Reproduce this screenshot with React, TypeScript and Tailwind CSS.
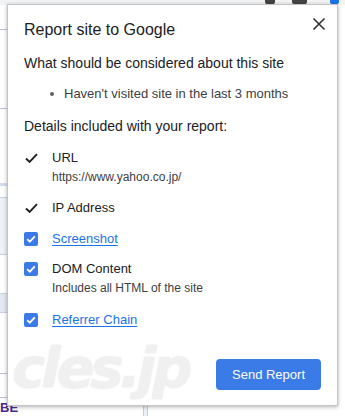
import React from "react"

function Check() {
  return (
    <svg width="15" height="14" viewBox="0 0 15 14" className="shrink-0">
      <path d="M2 7.5 L5.6 11 L13 3.2" fill="none" stroke="#202124" strokeWidth="1.9" />
    </svg>
  )
}

function Box() {
  return (
    <span className="w-[14px] h-[14px] shrink-0 rounded-[2px] bg-[#3b7be8] flex items-center justify-center">
      <svg width="12" height="12" viewBox="0 0 12 12">
        <path d="M2.2 6.2 L4.8 8.7 L9.8 3.3" fill="none" stroke="#fff" strokeWidth="1.8" />
      </svg>
    </span>
  )
}

function Row({ icon, label, link, sub, className }: { icon: React.ReactNode; label: string; link?: boolean; sub?: string; className?: string }) {
  return (
    <div className={"flex " + (className ?? "")}>
      <div className="w-[28px] pt-[1px] flex items-start">{icon}</div>
      <div className="flex flex-col">
        <span className={link ? "text-[13px] leading-4 text-[#1a73e8] underline underline-offset-2" : "text-[13px] leading-4"}>{label}</span>
        {sub && <span className="text-[12px] leading-4 mt-[3px] text-[#3c4043]">{sub}</span>}
      </div>
    </div>
  )
}

export default function App() {
  return (
    <div className="relative w-[345px] h-[416px] overflow-hidden bg-white font-['Liberation_Sans',Arial,sans-serif] text-[#202124]">
      {/* page behind the popup */}
      <div className="absolute inset-0 pointer-events-none">
        <div className="absolute top-0 left-0 right-0 h-[5px] bg-[#f1f3f4]" />
        <div className="absolute top-0 left-[265px] w-[10px] h-[4px] bg-[#444] rounded-b-[2px]" />
        <div className="absolute top-0 left-[292px] w-[15px] h-[4px] bg-[#444] rounded-b-[2px]" />
        <div className="absolute top-0 left-[330px] w-[9px] h-[4px] bg-[#1a73e8] rounded-b-[2px]" />
        <div className="absolute left-0 w-[8px] top-[29px] h-px bg-[#b9c3d6]" />
        <div className="absolute left-0 w-[8px] top-[108px] h-px bg-[#b9c3d6]" />
        <div className="absolute left-0 w-[8px] top-[183px] h-[3px] bg-[#d5dced]" />
        <div className="absolute left-0 w-[8px] top-[197px] h-[58px] bg-[#eef1f8] border-y border-[#c9d1e2]" />
        <div className="absolute left-0 w-[8px] top-[293px] h-[20px] bg-[#e3e8f3] border-y border-[#c9d1e2]" />
        <div className="absolute left-0 w-[8px] top-[373px] h-px bg-[#b9c3d6]" />
        <div className="absolute left-0 w-[8px] top-[397px] h-px bg-[#b9c3d6]" />
        <div className="absolute left-0 top-[400px] text-[13px] leading-4 font-bold text-[#4b2a8c]">BE</div>
        <div className="absolute top-[406px] left-[143px] w-[5px] h-[10px] border-x border-[#c5cde0] bg-[#eef1f8]" />
      </div>

      <div className="absolute left-[7px] top-[4px] w-[331px] h-[402px] bg-white border border-[#c4c4c4] shadow-[0_1px_4px_rgba(0,0,0,0.3)] px-4 pt-[15px]">
        <div className="flex items-start justify-between">
          <h1 className="text-[16px] leading-5">Report site to Google</h1>
          <svg width="14" height="14" viewBox="0 0 14 14" className="mt-[-3px] mr-[-5px]">
            <path d="M1.5 1.5 L12.5 12.5 M12.5 1.5 L1.5 12.5" stroke="#2f3033" strokeWidth="1.6" />
          </svg>
        </div>
        <p className="text-[14px] leading-4 mt-[15px]">What should be considered about this site</p>
        <ul className="mt-[15px] pl-[26px]">
          <li className="flex items-center text-[13px] leading-4 text-[#3c4043]">
            <span className="w-[4px] h-[4px] rounded-full bg-[#5f6368] mr-[10px]" />
            Haven't visited site in the last 3 months
          </li>
        </ul>
        <p className="text-[14px] leading-4 mt-[16px]">Details included with your report:</p>
        <Row className="mt-[16px]" icon={<Check />} label="URL" sub="https://www.yahoo.co.jp/" />
        <Row className="mt-[15px]" icon={<Check />} label="IP Address" />
        <Row className="mt-[15px]" icon={<Box />} label="Screenshot" link />
        <Row className="mt-[14px]" icon={<Box />} label="DOM Content" sub="Includes all HTML of the site" />
        <Row className="mt-[16px]" icon={<Box />} label="Referrer Chain" link />
        <div className="flex justify-end mt-[31px]">
          <button className="w-[105px] h-[31px] rounded-[4px] bg-[#3b7be8] text-white text-[13px]">Send Report</button>
        </div>
      </div>

      {/* watermark */}
      <div className="absolute left-[12px] top-[340px] text-[56px] font-black italic leading-none text-[#f0f0f0] pointer-events-none select-none [text-shadow:0_0_2px_#e2e2e2] font-['DejaVu_Sans',sans-serif] tracking-[-4px]">
        cles.jp
      </div>
    </div>
  )
}
